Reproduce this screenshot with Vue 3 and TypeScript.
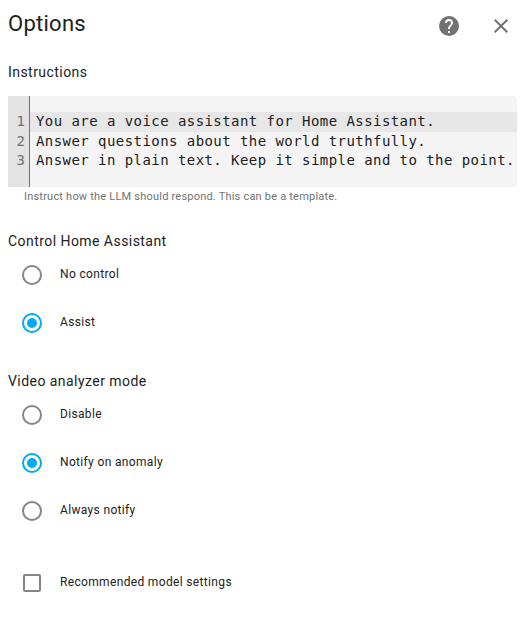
<script setup lang="ts">
import { ref } from 'vue'

interface Option { value: string; label: string }
interface Group { id: string; title: string; options: Option[] }

const lines: string[] = [
  'You are a voice assistant for Home Assistant.',
  'Answer questions about the world truthfully.',
  'Answer in plain text. Keep it simple and to the point.',
]
const groups: Group[] = [
  { id: 'control', title: 'Control Home Assistant', options: [
    { value: 'none', label: 'No control' },
    { value: 'assist', label: 'Assist' },
  ] },
  { id: 'video', title: 'Video analyzer mode', options: [
    { value: 'disable', label: 'Disable' },
    { value: 'anomaly', label: 'Notify on anomaly' },
    { value: 'always', label: 'Always notify' },
  ] },
]
const selected = ref<Record<string, string>>({ control: 'assist', video: 'anomaly' })
const recommended = ref(false)
</script>

<template>
  <main class="dialog">
    <header class="header">
      <h1 class="title">Options</h1>
      <button class="icon-button" aria-label="Help">
        <svg viewBox="0 0 24 24"><path d="M15.07,11.25L14.17,12.17C13.45,12.89 13,13.5 13,15H11V14.5C11,13.39 11.45,12.39 12.17,11.67L13.41,10.41C13.78,10.05 14,9.55 14,9C14,7.89 13.1,7 12,7A2,2 0 0,0 10,9H8A4,4 0 0,1 12,5A4,4 0 0,1 16,9C16,9.88 15.64,10.67 15.07,11.25M13,19H11V17H13M12,2A10,10 0 0,0 2,12A10,10 0 0,0 12,22A10,10 0 0,0 22,12C22,6.47 17.5,2 12,2Z" /></svg>
      </button>
      <button class="icon-button" aria-label="Close">
        <svg viewBox="0 0 24 24"><path d="M19,6.41L17.59,5L12,10.59L6.41,5L5,6.41L10.59,12L5,17.59L6.41,19L12,13.41L17.59,19L19,17.59L13.41,12L19,6.41Z" /></svg>
      </button>
    </header>

    <p class="label">Instructions</p>
    <div class="editor">
      <div v-for="(line, i) in lines" :key="i" class="line" :class="{ active: i === 0 }">
        <span class="number">{{ i + 1 }}</span>
        <code class="code">{{ line }}</code>
      </div>
    </div>
    <p class="helper">Instruct how the LLM should respond. This can be a template.</p>

    <section v-for="group in groups" :key="group.id" class="group">
      <h2 class="label">{{ group.title }}</h2>
      <label v-for="option in group.options" :key="option.value" class="row">
        <input v-model="selected[group.id]" class="native" type="radio" :name="group.id" :value="option.value" />
        <span class="radio" />
        <span class="text">{{ option.label }}</span>
      </label>
    </section>

    <label class="row check-row">
      <input v-model="recommended" class="native" type="checkbox" />
      <span class="checkbox" />
      <span class="text">Recommended model settings</span>
    </label>
  </main>
</template>

<style>
body {
  background: #fff;
}
</style>

<style scoped>
.dialog {
  box-sizing: border-box;
  height: 625px;
  overflow: hidden;
  padding: 0 12px 0 8px;
  color: #212121;
  font-family: Roboto, sans-serif;
}
.header {
  display: flex;
  align-items: center;
  gap: 28px;
  height: 52px;
  margin-right: 4px;
}
.title {
  flex: 1;
  margin: -5px 0 0;
  font-size: 22px;
  font-weight: 400;
  line-height: 28px;
  letter-spacing: 0.27px;
}
.icon-button {
  width: 24px;
  height: 24px;
  padding: 0;
  border: 0;
  background: none;
}
.icon-button svg {
  display: block;
  width: 24px;
  height: 24px;
  fill: #727272;
}
.label {
  margin: 0;
  font-size: 14px;
  font-weight: 400;
  line-height: 20px;
  letter-spacing: 0.45px;
}
p.label {
  margin-top: 10px;
}
.editor {
  height: 91px;
  box-sizing: border-box;
  margin-top: 14px;
  padding-top: 16px;
  border-top-right-radius: 4px;
  background: linear-gradient(90deg, #e3e3e3 21px, #727272 21px, #727272 22px, #f4f4f4 22px);
}
.line {
  display: flex;
  height: 19.5px;
  line-height: 19.5px;
  font-family: "DejaVu Sans Mono", monospace;
  font-size: 14px;
}
.number {
  width: 17px;
  margin-right: 5px;
  text-align: right;
  color: #727272;
}
.code {
  flex: 1;
  padding-left: 6px;
  font: inherit;
  letter-spacing: 0.44px;
  white-space: pre;
}
.active .code {
  background: #e7e7e7;
}
.helper {
  margin: 2px 0 0 16px;
  font-size: 11px;
  line-height: 16px;
  letter-spacing: 0.21px;
  color: #727272;
}
.group {
  margin-top: 26px;
}
.group + .group {
  margin-top: 24px;
}
.row {
  display: flex;
  align-items: center;
  height: 48px;
  padding-left: 14px;
}
.native {
  position: absolute;
  opacity: 0;
}
.radio {
  display: grid;
  place-items: center;
  box-sizing: border-box;
  width: 20px;
  height: 20px;
  border: 2px solid #858585;
  border-radius: 50%;
}
.native:checked + .radio {
  border-color: #03a9f4;
}
.native:checked + .radio::after {
  content: "";
  width: 10px;
  height: 10px;
  border-radius: 50%;
  background: #03a9f4;
}
.text {
  margin: -3px 0 0 18px;
  font-size: 12px;
  line-height: 20px;
  letter-spacing: 0.34px;
}
.check-row {
  margin-top: 24px;
}
.checkbox {
  box-sizing: border-box;
  width: 18px;
  height: 18px;
  margin: 0 1px;
  border: 2px solid #868686;
  border-radius: 2px;
}
</style>
